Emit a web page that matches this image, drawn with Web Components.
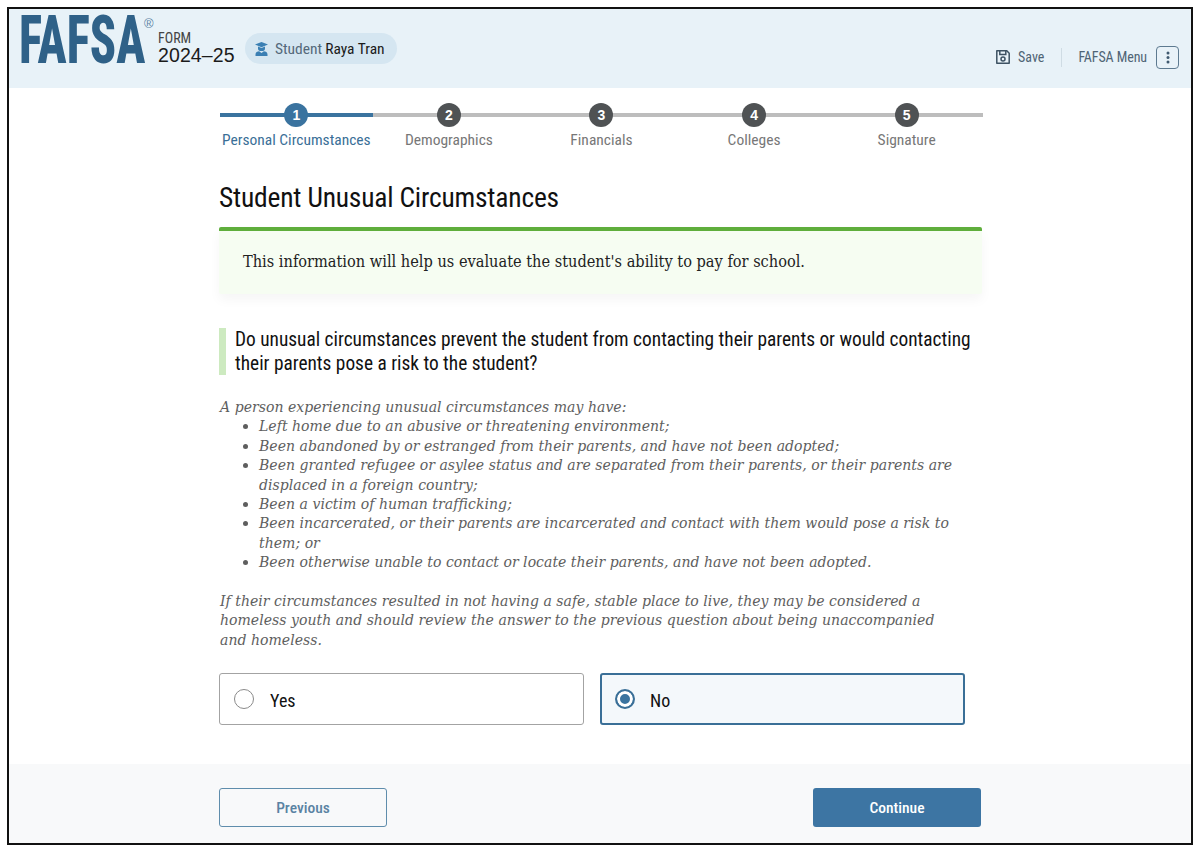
<!DOCTYPE html>
<html lang="en">
<head>
<meta charset="utf-8">
<title>FAFSA</title>
<style>
  html, body { margin: 0; background: #fff; }
  body { font-family: Roboto, sans-serif; }
</style>
</head>
<body>
<fafsa-frame>
  <fafsa-header slot="header"></fafsa-header>
  <fafsa-stepper>
    <fafsa-step num="1" active>Personal Circumstances</fafsa-step>
    <fafsa-step num="2">Demographics</fafsa-step>
    <fafsa-step num="3">Financials</fafsa-step>
    <fafsa-step num="4">Colleges</fafsa-step>
    <fafsa-step num="5">Signature</fafsa-step>
  </fafsa-stepper>
  <fafsa-page-title>Student Unusual Circumstances</fafsa-page-title>
  <fafsa-callout>This information will help us evaluate the student's ability to pay for school.</fafsa-callout>
  <fafsa-question>Do unusual circumstances prevent the student from contacting their parents or would contacting their parents pose a risk to the student?</fafsa-question>
  <fafsa-help></fafsa-help>
  <fafsa-choices>
    <fafsa-radio>Yes</fafsa-radio>
    <fafsa-radio checked>No</fafsa-radio>
  </fafsa-choices>
  <fafsa-footer slot="footer"></fafsa-footer>
</fafsa-frame>

<script>
const SANS = 'Roboto, sans-serif';
const SERIF = '"DejaVu Serif Condensed", "DejaVu Serif", serif';

function define(name, html) {
  customElements.define(name, class extends HTMLElement {
    constructor() {
      super();
      this.attachShadow({ mode: 'open' });
    }
    connectedCallback() {
      this.shadowRoot.innerHTML = typeof html === 'function' ? html(this) : html;
    }
  });
}

define('fafsa-frame', `
  <style>
    :host { box-sizing: border-box; width: 1186px; height: 838px; margin: 7px 0 0 7px;
      border: 2px solid #111; display: flex; flex-direction: column; overflow: hidden; }
    main { flex: 1; padding: 0 0 0 210px; }
  </style>
  <slot name="header"></slot>
  <main><slot></slot></main>
  <slot name="footer"></slot>
`);

define('fafsa-header', `
  <style>
    :host { display: flex; align-items: flex-start; height: 79px; background: #e8f2f8; padding-left: 9px; box-sizing: border-box; }
    .logo { width: 127px; height: 79px; position: relative; flex: none; }
    /* condensed Roboto is already the right width, only the height is stretched */
    .logo b { display: block; width: max-content; margin-left: 1px; font: 800 48.500px/47px ${SANS}; font-stretch: 75%; color: #2f6188;
      transform: scaleY(1.36); transform-origin: 0 0; white-space: nowrap; }
    .logo sup { position: absolute; left: 126px; top: 8px; font: 400 13px/1 "Liberation Sans", sans-serif; color: #5b84a3; }
    .form { width: 79px; flex: none; margin: 23px 0 0 13px; color: #1b1b1b; }
    .form small { display: block; font: 400 14px/12px ${SANS}; font-stretch: 75%; color: #444; }
    .form span { display: block; font: 400 19.500px/21px "Liberation Sans", sans-serif; margin-top: 1px; letter-spacing: .1px; }
    .pill { display: flex; align-items: center; box-sizing: border-box; flex: none; width: 152px; height: 31px; margin: 24px 0 0 8px; padding-left: 9px; border-radius: 16px;
      background: #d5e6f1; font: 400 15.500px ${SANS}; font-stretch: 75%; color: #54697a; white-space: nowrap; }
    .pill svg { margin-right: 6px; flex: none; }
    .pill b { font-weight: 450; color: #1b1b1b; margin-left: 3px; }
    .right { margin-left: auto; display: flex; align-items: center; height: 24px; margin-top: 36px; padding-right: 12px;
      font: 450 14px ${SANS}; font-stretch: 75%; color: #4f6475; white-space: nowrap; }
    .save { display: flex; align-items: center; gap: 7px; padding-right: 17px; border-right: 1px solid #cfdce4; height: 19px; }
    .menu { margin-left: 16px; letter-spacing: -.1px; }
    .kebab { box-sizing: border-box; width: 23px; height: 23px; margin-left: 9px; border: 1.500px solid #5d7a90; border-radius: 4px;
      display: flex; align-items: center; justify-content: center; }
  </style>
  <div class="logo"><b>FAFSA</b><sup>®</sup></div>
  <div class="form"><small>FORM</small><span>2024–25</span></div>
  <div class="pill">
    <svg width="15" height="15" viewBox="0 0 15 15" fill="#3a7fb3"><path d="M7.500 1 14 3.600 7.500 6.200 1 3.600Z"/><path d="M4 5.600 7.500 7 11 5.600V7.400a3.500 2.600 0 0 1-7 0Z"/><path d="M1.500 15v-1.600c0-2 2-3.100 3.600-3.100L7.500 12l2.400-1.700c1.600 0 3.600 1.100 3.600 3.100V15Z"/></svg>
    Student <b>Raya Tran</b>
  </div>
  <div class="right">
    <div class="save">
      <svg width="16" height="16" viewBox="0 0 16 16" fill="none" stroke="#3d5263" stroke-width="1.500"><path d="M1.800 1.800h10l2.400 2.400v10H1.800Z" stroke-linejoin="round"/><path d="M4.800 2v3.500h6V2"/><circle cx="8" cy="10" r="2"/></svg>
      Save
    </div>
    <div class="menu">FAFSA Menu</div>
    <div class="kebab"><svg width="4" height="13" viewBox="0 0 4 13" fill="#3f5a70"><circle cx="2" cy="2" r="1.500"/><circle cx="2" cy="6.500" r="1.500"/><circle cx="2" cy="11" r="1.500"/></svg></div>
  </div>
`);

define('fafsa-stepper', `
  <style>
    :host { display: grid; grid-template-columns: repeat(5, 152.6px); margin-top: 15px; margin-left: 1px; }
  </style>
  <slot></slot>
`);

define('fafsa-step', el => {
  const active = el.hasAttribute('active');
  const c = active ? '#3a739f' : '#bdbdbd';
  return `
  <style>
    :host { display: flex; flex-direction: column; align-items: center;
      background: linear-gradient(${c}, ${c}) 0 10px / 100% 4px no-repeat; }
    .num { width: 24px; height: 24px; border-radius: 50%; background: ${active ? '#3a739f' : '#4f5254'}; color: #fff;
      font: 700 14px/24px "Liberation Sans", sans-serif; text-align: center; }
    .label { margin-top: 2px; font: ${active ? 450 : 400} 15.500px/22px ${SANS}; font-stretch: 75%; color: ${active ? '#3a6f97' : '#777'}; white-space: nowrap; }
  </style>
  <div class="num">${el.getAttribute('num')}</div>
  <div class="label"><slot></slot></div>`;
});

define('fafsa-page-title', `
  <style>
    :host { display: block; margin-top: 29px; font: 450 27.500px/36px ${SANS}; font-stretch: 75%; letter-spacing: -.2px; color: #111; white-space: nowrap; }
  </style>
  <slot></slot>
`);

define('fafsa-callout', `
  <style>
    :host { display: block; box-sizing: border-box; width: 763px; height: 67px; margin-top: 11px; padding: 19px 24px 0;
      background: #f6fdf2; border-top: 4px solid #5fae3c; border-radius: 2px; box-shadow: 0 6px 12px rgba(0,0,0,.04);
      font: 400 16.200px/24px ${SERIF}; color: #222; white-space: nowrap; }
  </style>
  <slot></slot>
`);

define('fafsa-question', `
  <style>
    :host { display: block; box-sizing: border-box; width: 756px; margin-top: 34px; padding: 0 0 0 9px; border-left: 7px solid #cdeac0;
      font: 420 19.350px/23.500px ${SANS}; font-stretch: 75%; color: #111; }
  </style>
  <slot></slot>
`);

define('fafsa-help', `
  <style>
    :host { display: block; width: 735px; margin-top: 23px; padding-left: 1px; color: #5e5e5e; letter-spacing: .03px;
      font: italic 400 15.600px/19.400px ${SERIF}; }
    ul { margin: 0; padding: 0 0 0 39px; }
    p { margin: 0; }
  </style>
  <p>A person experiencing unusual circumstances may have:</p>
  <ul>
    <li>Left home due to an abusive or threatening environment;</li>
    <li>Been abandoned by or estranged from their parents, and have not been adopted;</li>
    <li>Been granted refugee or asylee status and are separated from their parents, or their parents are displaced in a foreign country;</li>
    <li>Been a victim of human trafficking;</li>
    <li>Been incarcerated, or their parents are incarcerated and contact with them would pose a risk to them; or</li>
    <li>Been otherwise unable to contact or locate their parents, and have not been adopted.</li>
  </ul>
  <p style="margin-top:19.400px">If their circumstances resulted in not having a safe, stable place to live, they may be considered a homeless youth and should review the answer to the previous question about being unaccompanied and homeless.</p>
`);

define('fafsa-choices', `
  <style>
    :host { display: grid; grid-template-columns: 365px 365px; gap: 16px; margin-top: 23px; }
  </style>
  <slot></slot>
`);

define('fafsa-radio', el => {
  const on = el.hasAttribute('checked');
  return `
  <style>
    :host { display: flex; align-items: center; box-sizing: border-box; height: 52px; padding-left: ${on ? 13 : 14}px;
      border: ${on ? '2px solid #3a6f97' : '1.500px solid #a3a3a3'}; border-radius: 3px; background: ${on ? '#f4f8fb' : '#fff'};
      font: 450 18px ${SANS}; font-stretch: 75%; color: #111; }
    .dot { box-sizing: border-box; flex: none; width: 20px; height: 20px; border-radius: 50%; margin-right: ${on ? 15 : 16}px;
      border: ${on ? '2px solid #3a6f97' : '1.500px solid #8a8a8a'}; background: ${on ? '#3a739f' : '#fff'}; box-shadow: ${on ? 'inset 0 0 0 3px #fff' : 'none'}; }
    .t { padding-top: 2px; }
  </style>
  <span class="dot"></span><span class="t"><slot></slot></span>`;
});

define('fafsa-footer', `
  <style>
    :host { display: flex; box-sizing: border-box; height: 79px; background: #f8f9fa; padding: 24px 210px 0 210px; justify-content: space-between; }
    .btn { box-sizing: border-box; width: 168px; height: 39px; display: flex; align-items: center; justify-content: center; border-radius: 3px;
      font: 500 15.500px ${SANS}; font-stretch: 75%; white-space: nowrap; }
    .prev { border: 1.500px solid #5f8dac; color: #5a83a3; }
    .next { background: #3d75a3; color: #fff; }
  </style>
  <div class="btn prev">Previous</div>
  <div class="btn next">Continue</div>
`);
</script>
</body>
</html>
